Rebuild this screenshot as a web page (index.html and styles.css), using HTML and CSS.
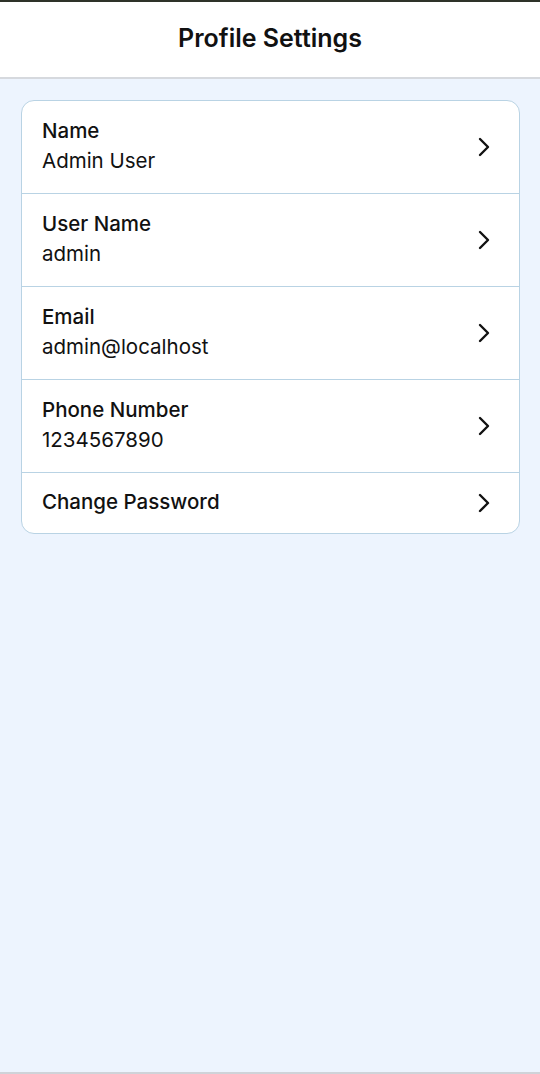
FILE: index.html
```html
<!DOCTYPE html>
<html lang="en">
<head>
<meta charset="utf-8">
<title>Profile Settings</title>
<link rel="stylesheet" href="styles.css">
</head>
<body>
<div class="screen">
  <header class="topbar">
    <h1 class="title">Profile Settings</h1>
  </header>
  <main class="content">
    <ul class="card">
      <li class="row">
        <div class="texts"><span class="label">Name</span><span class="value">Admin User</span></div>
        <svg class="chev" viewBox="0 0 14 22" width="14" height="22"><path d="M3 3 L11 11 L3 19" fill="none" stroke="#111" stroke-width="2.4" stroke-linecap="round" stroke-linejoin="round"/></svg>
      </li>
      <li class="row">
        <div class="texts"><span class="label">User Name</span><span class="value">admin</span></div>
        <svg class="chev" viewBox="0 0 14 22" width="14" height="22"><path d="M3 3 L11 11 L3 19" fill="none" stroke="#111" stroke-width="2.4" stroke-linecap="round" stroke-linejoin="round"/></svg>
      </li>
      <li class="row">
        <div class="texts"><span class="label">Email</span><span class="value">admin@localhost</span></div>
        <svg class="chev" viewBox="0 0 14 22" width="14" height="22"><path d="M3 3 L11 11 L3 19" fill="none" stroke="#111" stroke-width="2.4" stroke-linecap="round" stroke-linejoin="round"/></svg>
      </li>
      <li class="row">
        <div class="texts"><span class="label">Phone Number</span><span class="value">1234567890</span></div>
        <svg class="chev" viewBox="0 0 14 22" width="14" height="22"><path d="M3 3 L11 11 L3 19" fill="none" stroke="#111" stroke-width="2.4" stroke-linecap="round" stroke-linejoin="round"/></svg>
      </li>
      <li class="row">
        <div class="texts"><span class="label">Change Password</span></div>
        <svg class="chev" viewBox="0 0 14 22" width="14" height="22"><path d="M3 3 L11 11 L3 19" fill="none" stroke="#111" stroke-width="2.4" stroke-linecap="round" stroke-linejoin="round"/></svg>
      </li>
    </ul>
  </main>
  <div class="bottomline"></div>
</div>
</body>
</html>
```
FILE: styles.css
```css
* { box-sizing: border-box; }
html, body { margin: 0; padding: 0; }
body {
  font-family: "Inter", "Noto Sans", sans-serif;
  color: #111;
  background: #edf4fe;
}
.screen {
  width: 540px;
  height: 1074px;
  display: flex;
  flex-direction: column;
  background: #edf4fe;
}
.topbar {
  background: #fff;
  border-top: 2px solid #2e3229;
  border-bottom: 2px solid #d6d9de;
  height: 79px;
  display: flex;
  align-items: center;
  justify-content: center;
}
.title {
  margin: 0 0 3px;
  font-size: 25px;
  font-weight: 600;
  color: #111;
}
.content {
  flex: 1;
  padding: 21px 20px 0 21px;
}
.card {
  list-style: none;
  margin: 0;
  padding: 0;
  background: #fff;
  border: 1px solid #b9d3e4;
  border-radius: 13px;
  overflow: hidden;
}
.row {
  display: flex;
  align-items: center;
  justify-content: space-between;
  padding: 14px 28px 14px 20px;
  border-bottom: 1px solid #b9d3e4;
  min-height: 93px;
}
.row:last-child {
  border-bottom: none;
  min-height: 60px;
}
.texts {
  display: flex;
  flex-direction: column;
  margin-bottom: 2px;
}
.label {
  font-size: 20.5px;
  font-weight: 500;
  line-height: 30px;
}
.value {
  font-size: 20.5px;
  font-weight: 400;
  line-height: 30px;
}
.chev { display: block; }
.bottomline {
  height: 2px;
  background: #cfd3d9;
}
```
